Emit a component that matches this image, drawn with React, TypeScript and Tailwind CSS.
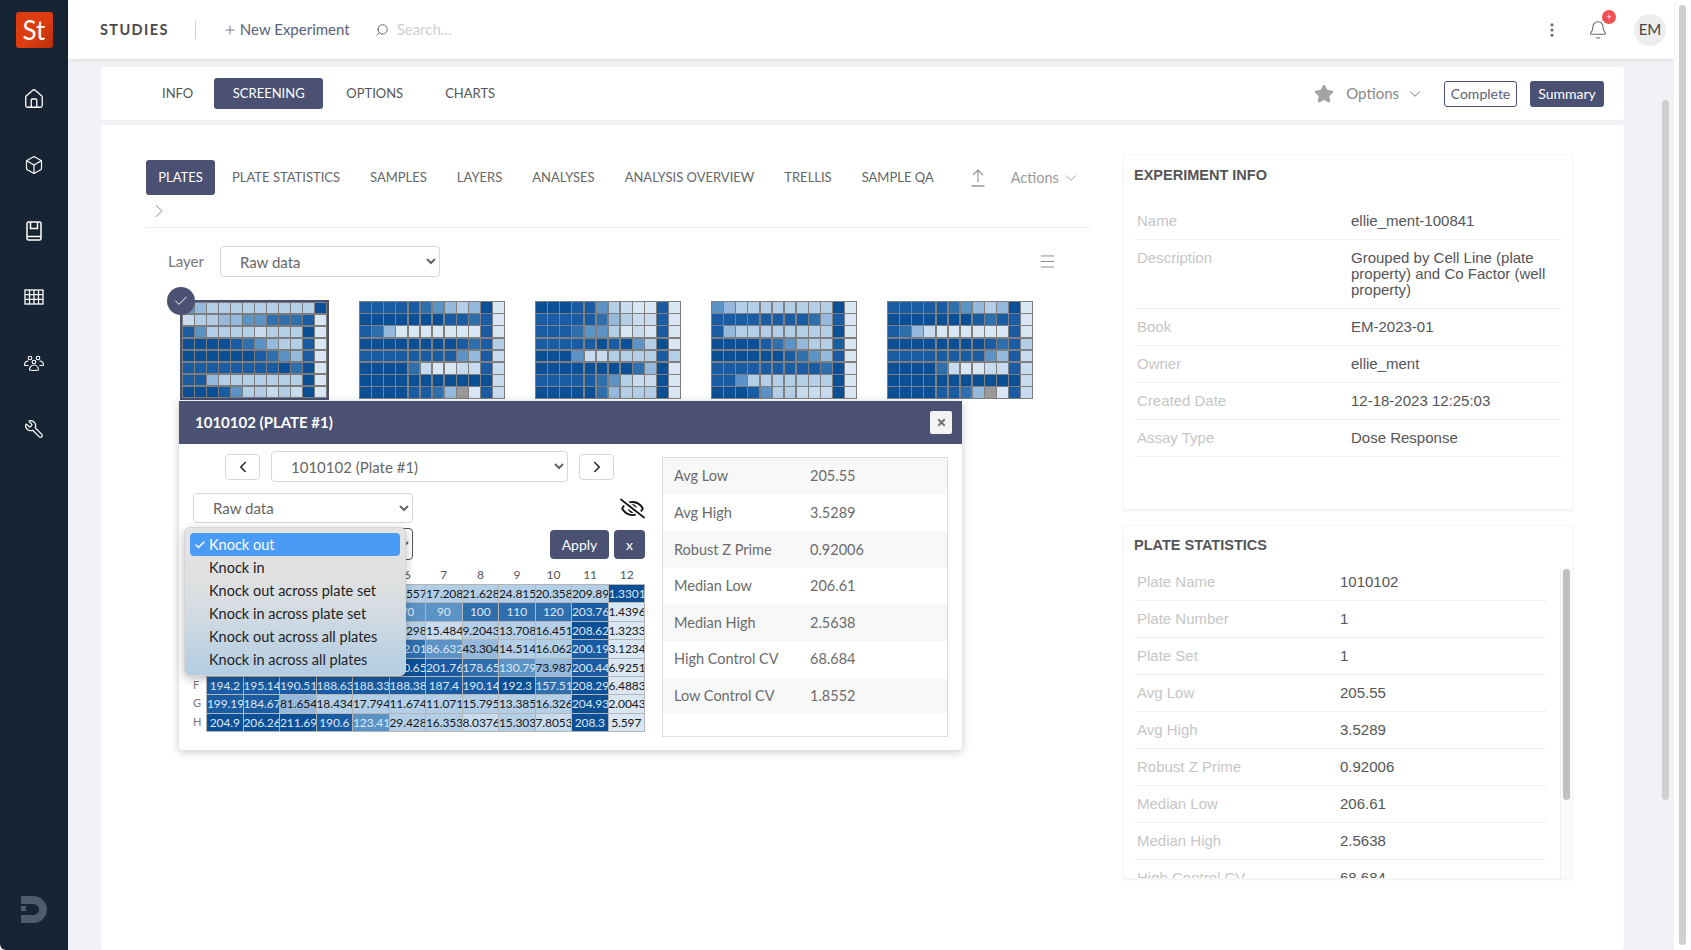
import { Box, ChevronDown, ChevronLeft, ChevronRight, EllipsisVertical, House, Menu, Plus, Bell, Search, Star, Wrench, Check } from "lucide-react";
import { FaRegEyeSlash, FaTimes } from "react-icons/fa";

const SWATCH: Record<string, string> = {
  a: "#0b4f96",
  b: "#1a5ca3",
  c: "#2f6fae",
  d: "#5b93c7",
  e: "#94b9dd",
  f: "#b3cfe8",
  g: "#c9dcef",
  h: "#d9e6f4",
  x: "#999999",
};

// one string per plate row, one letter per well
const PLATES = [
  ["defffffffffah".slice(0, 12), "gffeeddcccbh", "bdffffgfffah", "aaaabcdeffbh", "aaaaaabcdebh", "bbbbbbbbacah", "bbefffffffah", "aaabdffgfgah"],
  ["bbbbbcdefeah", "aaaaaaabbcbh", "bcehhhhhhhbh", "aaaaaaaabcbf", "bbbbbbbbdebg", "aaaacghhggbg", "aaaaaaaaaaag", "aaaabbcexhbg"],
  ["aaabbdfghhbh", "bbbbbcefggbh", "bbbcddfhghbh", "bbbbbabadfah", "aaadggffffbf", "aaaaaaaaceah", "bbbbbcdfggah", "aaaaacefffah"],
  ["deffffffffah", "bbbbbbbbcebh", "beffffffffah", "aaaabcdeffbh", "aaaaaabcdebh", "bbbbbbbbbcah", "bbdfffffffah", "aaabdffgggah"],
  ["bbbbbcdefeah", "aaaaaaabcbbh", "bceghhhhhhbh", "aaaaaaaabcbf", "bbbbbbbbdebg", "aaaacghhggbg", "aaaaaaaaaaag", "aaaabbcexhbg"],
];

const WELLS = [
  ["102.4", "98.112", "61.27", "44.906", "31.75", "19.557", "17.208", "21.628", "24.815", "20.358", "209.89", "1.3301"],
  ["10", "20", "30", "40", "50", "70", "90", "100", "110", "120", "203.76", "1.4396"],
  ["186.4", "121.9", "30.412", "24.77", "21.03", "17.298", "15.484", "9.2043", "13.708", "16.451", "208.62", "1.3233"],
  ["206.1", "203.7", "201.3", "198.5", "182.4", "152.01", "86.632", "43.304", "14.514", "16.062", "200.19", "3.1234"],
  ["207.2", "205.4", "204.9", "203.6", "206.1", "210.65", "201.76", "178.65", "130.79", "73.987", "200.44", "6.9251"],
  ["194.2", "195.14", "190.51", "188.63", "188.33", "188.38", "187.4", "190.14", "192.3", "157.51", "208.29", "6.4883"],
  ["199.19", "184.67", "81.654", "18.434", "17.794", "11.674", "11.071", "15.795", "13.385", "16.326", "204.93", "2.0043"],
  ["204.9", "206.26", "211.69", "190.6", "123.41", "29.428", "16.353", "8.0376", "15.303", "7.8053", "208.3", "5.597"],
];

const SUMMARY = [
  ["Avg Low", "205.55"],
  ["Avg High", "3.5289"],
  ["Robust Z Prime", "0.92006"],
  ["Median Low", "206.61"],
  ["Median High", "2.5638"],
  ["High Control CV", "68.684"],
  ["Low Control CV", "1.8552"],
];

const STATS = [
  ["Plate Name", "1010102"],
  ["Plate Number", "1"],
  ["Plate Set", "1"],
  ...SUMMARY.slice(0, 5),
  ["High Control CV", "68.684"],
];

const EXPERIMENT = [
  ["Name", "ellie_ment-100841"],
  ["Description", "Grouped by Cell Line (plate property) and Co Factor (well property)"],
  ["Book", "EM-2023-01"],
  ["Owner", "ellie_ment"],
  ["Created Date", "12-18-2023 12:25:03"],
  ["Assay Type", "Dose Response"],
];

const KNOCK = ["Knock out", "Knock in", "Knock out across plate set", "Knock in across plate set", "Knock out across all plates", "Knock in across all plates"];

function BookIcon() {
  return (
    <svg width="20" height="22" viewBox="0 0 20 22" fill="none" stroke="white" strokeWidth="1.5">
      <rect x="3" y="2" width="14" height="18" rx="1.5" />
      <path d="M3 16.5h14M6.5 2v6.5h7V2" />
    </svg>
  );
}

function GridIcon() {
  return (
    <svg width="20" height="16" viewBox="0 0 20 16" fill="none" stroke="white" strokeWidth="1.3">
      <rect x="1" y="1" width="18" height="14" />
      <path d="M5.5 1v14M10 1v14M14.5 1v14M1 5.7h18M1 10.3h18" />
    </svg>
  );
}

function TeamIcon() {
  return (
    <svg width="22" height="16" viewBox="0 0 22 16" fill="none" stroke="white" strokeWidth="1.1">
      <circle cx="7" cy="3" r="1.8" />
      <circle cx="15" cy="3" r="1.8" />
      <circle cx="11" cy="7" r="1.8" />
      <path d="M1.5 10.5c0-3 2-4.5 4-4.5M20.5 10.5c0-3-2-4.5-4-4.5M1.5 10.5h4M16.5 10.5h4" />
      <path d="M6.5 15c0-3 2-5 4.5-5s4.5 2 4.5 5l-4.5 0.5z" />
    </svg>
  );
}

function UploadIcon() {
  return (
    <svg width="16" height="20" viewBox="0 0 16 20" fill="none" stroke="#9a9a9a" strokeWidth="1.3">
      <path d="M8 14V2M3 7l5-5 5 5M1.5 18h13" />
    </svg>
  );
}

function BrandMark() {
  return (
    <svg width="28" height="29" viewBox="0 0 28 29" fill="#4d5c6b">
      <path d="M1 1h12c8 0 14 6 14 13.5S21 28 13 28H1v-8h12c3.300 0 6-2.500 6-5.500S16.300 9 13 9H1z" />
      <rect x="1" y="11" width="5" height="5" />
    </svg>
  );
}

function PlateThumb({ rows, selected }: { rows: string[]; selected?: boolean }) {
  return (
    <div className={selected ? "w-[149px] h-[100px] border-2 border-[#4a5173] bg-[#7c7c7c] p-px" : "w-[146px] h-[98px] border border-[#7f7f7f] bg-[#7f7f7f] mt-px"}>
      <div className="grid h-full grid-cols-12 grid-rows-8 gap-[1.5px]">
        {rows.flatMap((row, r) =>
          row.split("").map((w, c) => <div key={`${r}-${c}`} style={{ backgroundColor: SWATCH[w] }} />)
        )}
      </div>
    </div>
  );
}

function Heatmap() {
  return (
    <div>
      <div className="ml-[13px] grid h-[19px] grid-cols-12 items-center text-center text-[12px] text-[#555]">
        {WELLS[0].map((_, i) => (
          <span key={i}>{i + 1}</span>
        ))}
      </div>
      {WELLS.map((row, r) => (
        <div key={r} className="flex h-[18.4px]">
          <span className="w-[13px] text-[11px] leading-[18px] text-[#777]">{"ABCDEFGH"[r]}</span>
          <div className="grid flex-1 grid-cols-12 border-r border-[#b5b5b5]">
            {row.map((v, c) => {
              const lvl = PLATES[0][r][c];
              const dark = "abcd".includes(lvl);
              return (
                <div
                  key={c}
                  style={{ backgroundColor: SWATCH[lvl], color: dark ? "#dfe8f3" : "#161616" }}
                  className="overflow-hidden whitespace-nowrap border-l border-t border-[#b5b5b5] text-center text-[12px] leading-[17.4px] tracking-[-0.1px]"
                >
                  {v}
                </div>
              );
            })}
          </div>
        </div>
      ))}
      <div className="ml-[13px] h-px bg-[#b5b5b5]" />
    </div>
  );
}

function PlateModal() {
  return (
    <div className="absolute left-[33px] top-[101px] z-10 h-[349px] w-[783px] overflow-visible rounded-b-[4px] bg-white shadow-[0_2px_10px_rgba(0,0,0,0.22)]">
      <div className="flex h-[43px] items-center justify-between bg-[#4a5173] pl-[16px] pr-[10px]">
        <span className="text-[15px] font-bold text-white">1010102 (PLATE #1)</span>
        <button className="flex h-[23px] w-[22px] items-center justify-center rounded-[2px] bg-[#f3f3f3] text-[#6f6f6f]">
          <FaTimes size={11} />
        </button>
      </div>
      <div className="relative flex pl-[14px]">
        <div className="w-[452px] pt-[7px]">
          <div className="ml-[32px] flex items-center">
            <button className="flex h-[26px] w-[35px] items-center justify-center rounded-[4px] border border-[#d8d8d8] text-[#222]">
              <ChevronLeft size={18} />
            </button>
            <select defaultValue="p1" className="ml-[11px] h-[31px] w-[297px] rounded-[4px] border border-[#d8d8d8] bg-white pl-[15px] text-[15px] text-[#666]">
              <option value="p1">1010102 (Plate #1)</option>
            </select>
            <button className="ml-[11px] flex h-[26px] w-[35px] items-center justify-center rounded-[4px] border border-[#d8d8d8] text-[#222]">
              <ChevronRight size={18} />
            </button>
          </div>
          <div className="mt-[11px] flex items-center justify-between">
            <select defaultValue="raw" className="h-[30px] w-[220px] rounded-[4px] border border-[#d8d8d8] bg-white pl-[15px] text-[15px] text-[#666]">
              <option value="raw">Raw data</option>
            </select>
            <FaRegEyeSlash size={25} className="text-[#111]" />
          </div>
          <div className="mt-[5px] flex items-center justify-between">
            <select defaultValue="ko" className="h-[32px] w-[220px] rounded-[4px] border border-[#555] bg-white pl-[15px] text-[15px] text-[#666]">
              <option value="ko">Knock out</option>
            </select>
            <div className="flex gap-[5px]">
              <button className="h-[29px] w-[59px] rounded-[4px] bg-[#4a5173] text-[14px] text-white">Apply</button>
              <button className="h-[29px] w-[31px] rounded-[4px] bg-[#4a5173] text-[14px] text-white">x</button>
            </div>
          </div>
          <div className="mt-[5px]">
            <Heatmap />
          </div>
        </div>
        <div className="ml-[17px] mt-[13px] h-[280px] w-[286px] border border-[#dddddd]">
          {SUMMARY.map(([k, v], i) => (
            <div key={k} className={`flex h-[36.6px] items-center pl-[11px] text-[14.5px] text-[#6b6b6b] ${i % 2 === 0 ? "bg-[#f8f8f8]" : "bg-white"}`}>
              <span className="w-[136px]">{k}</span>
              <span>{v}</span>
            </div>
          ))}
        </div>
        <div className="absolute left-[5px] top-[83px] z-20 h-[149px] w-[222px] rounded-[6px] border border-[#d4d4d4] bg-[linear-gradient(180deg,#e6e4e2_0%,#dcdfe1_45%,#b2cde3_100%)] p-[5px] shadow-[0_3px_10px_rgba(0,0,0,0.25)]">
          {KNOCK.map((k, i) => (
            <div
              key={k}
              className={`flex h-[23px] items-center rounded-[4px] text-[14.5px] ${i === 0 ? "bg-[#4a9bf5] text-white" : "text-[#222]"}`}
            >
              <span className="flex w-[19px] justify-center">{i === 0 && <Check size={12} strokeWidth={3} />}</span>
              {k}
            </div>
          ))}
        </div>
      </div>
    </div>
  );
}

function InfoRows({ rows, valueX }: { rows: string[][]; valueX: string }) {
  return (
    <>
      {rows.map(([k, v]) => (
        <div key={k} className="flex border-b border-[#f1f1f1] py-[10px] text-[15px] leading-[16px]">
          <span className={`${valueX} shrink-0 pl-[3px] text-[#c6c6c6]`}>{k}</span>
          <span className="text-[#555]">{v}</span>
        </div>
      ))}
    </>
  );
}

export default function App() {
  const font = { fontFamily: "Lato, 'Noto Sans', sans-serif" };
  return (
    <div style={font} className="flex h-[950px] w-[1691px] overflow-hidden bg-white">
      <aside className="flex w-[68px] shrink-0 flex-col items-center rounded-bl-[6px] bg-[#172433] pt-[12px] text-white">
        <div className="flex h-[36px] w-[37px] items-center justify-center rounded-[3px] bg-[linear-gradient(135deg,#dd3c10_55%,#b8300f_100%)] text-[26px] leading-none text-white">
          St
        </div>
        <div className="mt-[18px] flex flex-col items-center">
          <div className="flex h-[66px] items-center"><House size={22} strokeWidth={1.4} /></div>
          <div className="flex h-[66px] items-center"><Box size={20} strokeWidth={1.4} /></div>
          <div className="flex h-[66px] items-center"><BookIcon /></div>
          <div className="flex h-[66px] items-center"><GridIcon /></div>
          <div className="flex h-[66px] items-center"><TeamIcon /></div>
          <div className="flex h-[66px] items-center"><Wrench size={20} strokeWidth={1.4} className="-scale-x-100" /></div>
        </div>
        <div className="mt-auto mb-[26px]"><BrandMark /></div>
      </aside>

      <div className="flex w-[1606px] shrink-0 flex-col bg-[#f0f2f6]">
        <header className="flex h-[59px] shrink-0 items-center bg-white pl-[32px] pr-[8px] shadow-[0_1px_4px_rgba(0,0,0,0.08)]">
          <span className="text-[14.5px] font-bold tracking-[1.4px] text-[#4a4a4a]">STUDIES</span>
          <span className="ml-[26px] h-[18px] w-px bg-[#cfcfcf]" />
          <span className="ml-[27px] flex items-center gap-[3px] text-[15px] text-[#5a6178]">
            <Plus size={14} strokeWidth={1.4} /> New Experiment
          </span>
          <Search size={14} strokeWidth={1.5} className="ml-[25px] -scale-x-100 text-[#555]" />
          <span className="ml-[8px] text-[15px] text-[#d0d0d0]">Search...</span>
          <EllipsisVertical size={18} className="ml-auto text-[#666]" />
          <div className="relative ml-[27px]">
            <Bell size={20} strokeWidth={1.3} className="text-[#666]" />
            <span className="absolute -right-[8px] -top-[10px] flex h-[14px] w-[14px] items-center justify-center rounded-full bg-[#f05050] text-[9px] text-white">+</span>
          </div>
          <span className="ml-[26px] flex h-[32px] w-[32px] items-center justify-center rounded-full bg-[#eeeeee] text-[15px] text-[#444]">EM</span>
        </header>

        <main className="flex flex-1 flex-col gap-[5px] pl-[33px] pr-[50px] pt-[8px]">
          <section className="flex h-[53px] shrink-0 items-center rounded-[3px] bg-white pl-[61px] pr-[20px]">
            <span className="text-[13px] text-[#555]">INFO</span>
            <span className="ml-[21px] flex h-[31px] w-[109px] items-center justify-center rounded-[3px] bg-[#4a5173] text-[13px] text-white">SCREENING</span>
            <span className="ml-[23px] text-[13px] text-[#555]">OPTIONS</span>
            <span className="ml-[42px] text-[13px] text-[#555]">CHARTS</span>
            <Star size={20} fill="#a3a3a3" stroke="#a3a3a3" className="ml-auto" />
            <span className="ml-[12px] text-[15px] text-[#888]">Options</span>
            <ChevronDown size={18} strokeWidth={1.3} className="ml-[7px] text-[#777]" />
            <button className="ml-[20px] h-[26px] w-[73px] rounded-[3px] border border-[#4a5173] text-[14px] text-[#5a6178]">Complete</button>
            <button className="ml-[13px] h-[26px] w-[74px] rounded-[3px] bg-[#4a5173] text-[14px] text-white">Summary</button>
          </section>

          <section className="flex flex-1 rounded-[3px] bg-white pl-[45px] pt-[29px]">
            <div className="relative mt-[6px] h-fit w-[944px]">
              <div className="flex h-[35px] items-center text-[13px] text-[#666]">
                <span className="flex h-[35px] w-[69px] items-center justify-center rounded-[3px] bg-[#4a5173] text-white">PLATES</span>
                <span className="ml-[17px]">PLATE STATISTICS</span>
                <span className="ml-[30px]">SAMPLES</span>
                <span className="ml-[30px]">LAYERS</span>
                <span className="ml-[30px]">ANALYSES</span>
                <span className="ml-[30px]">ANALYSIS OVERVIEW</span>
                <span className="ml-[30px]">TRELLIS</span>
                <span className="ml-[30px]">SAMPLE QA</span>
                <span className="ml-[36px]"><UploadIcon /></span>
                <span className="ml-[25px] text-[14.5px] text-[#999]">Actions</span>
                <ChevronDown size={18} strokeWidth={1.2} className="ml-[3px] text-[#999]" />
              </div>
              <div className="flex h-[33px] items-center border-b border-[#eeeeee] pl-[2px]">
                <ChevronRight size={22} strokeWidth={1.1} className="text-[#999]" />
              </div>
              <div className="mt-[18px] flex h-[31px] items-center">
                <span className="ml-[22px] text-[15px] text-[#777]">Layer</span>
                <select defaultValue="raw" className="ml-[16px] h-[31px] w-[220px] rounded-[4px] border border-[#d8d8d8] bg-white pl-[15px] text-[15px] text-[#666]">
                  <option value="raw">Raw data</option>
                </select>
                <Menu size={19} strokeWidth={1.2} className="ml-[598px] text-[#888]" />
              </div>
              <div className="relative mt-[23px]">
                <div className="ml-[34px] flex h-[100px] gap-[30px]">
                  {PLATES.map((rows, i) => (
                    <PlateThumb key={i} rows={rows} selected={i === 0} />
                  ))}
                </div>
                <span className="absolute left-[21px] -top-[13px] flex h-[28px] w-[28px] items-center justify-center rounded-full bg-[#4a5173] text-white">
                  <Check size={16} strokeWidth={1.5} />
                </span>
                <PlateModal />
              </div>
            </div>

            <div className="ml-[33px] flex w-[450px] flex-col gap-[15px]">
              <div className="h-[356px] border border-[#f5f5f5] px-[10px] pt-[10px] shadow-[0_1px_2px_rgba(0,0,0,0.06)]" style={{ fontFamily: "'Liberation Sans', Arial, sans-serif" }}>
                <h3 className="mb-[18px] text-[14.5px] font-bold leading-[20px] text-[#555]">EXPERIMENT INFO</h3>
                <div className="w-[427px]"><InfoRows rows={EXPERIMENT} valueX="w-[217px]" /></div>
              </div>
              <div className="relative h-[354px] overflow-hidden border border-[#f5f5f5] pl-[10px] pt-[9px] shadow-[0_1px_2px_rgba(0,0,0,0.06)]" style={{ fontFamily: "'Liberation Sans', Arial, sans-serif" }}>
                <h3 className="text-[14.5px] font-bold leading-[20px] text-[#555]">PLATE STATISTICS</h3>
                <div className="mt-[9px] w-[413px]"><InfoRows rows={STATS} valueX="w-[206px]" /></div>
                <div className="absolute bottom-0 right-0 top-[42px] w-[12px] border-l border-[#eeeeee] bg-[#fafafa] pl-[2px] pt-[1px]">
                  <div className="h-[231px] w-[7px] rounded-[4px] bg-[#c0c0c0]" />
                </div>
              </div>
            </div>
          </section>
        </main>
      </div>

      <div className="absolute left-[1662px] top-[100px] h-[700px] w-[7px] rounded-[4px] bg-[#cfcfcf]" />
      <div className="absolute left-[1679px] top-[5px] h-[940px] w-[7px] rounded-[4px] bg-[#cfcfcf]" />
    </div>
  );
}
